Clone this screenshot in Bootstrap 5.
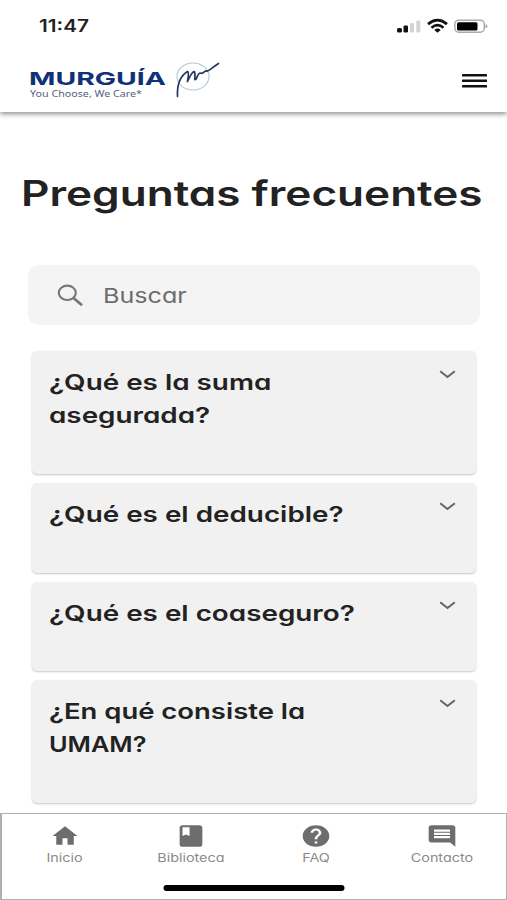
<!DOCTYPE html>
<html lang="es">
<head>
<meta charset="utf-8">
<meta name="viewport" content="width=device-width, initial-scale=1">
<title>Preguntas frecuentes</title>
<link href="https://cdn.jsdelivr.net/npm/bootstrap@5.3.0/dist/css/bootstrap.min.css" rel="stylesheet">
<style>
  body { font-family: Inter, "Open Sans", sans-serif; font-feature-settings: "cv11"; color: #222; height: 900px; overflow: hidden; background: #fff; }
  svg { display: block; flex: none; }
  .wide { display: inline-block; white-space: nowrap; transform-origin: left center; }
  .app-header { height: 112px; box-shadow: 0 2px 5px rgba(0,0,0,.45); flex: none; }
  .status { height: 52px; padding: 0 19px 0 39px; }
  .clock { font-size: 17px; font-weight: 600; line-height: 54px; transform: scaleX(1.22); font-feature-settings: normal; }
  .brand-bar { height: 58px; padding: 0 19px 0 28px; }
  .page-title { font-size: 35px; font-weight: 560; line-height: 44px; margin: 59px 0 0 21px; }
  .page-title .wide { transform: scaleX(1.26); }
  .search { height: 60px; margin: 50px 27px 0 28px; border-radius: 11px; background: #f4f4f4; padding-left: 29px; color: #6c6c6c; font-size: 20.5px; flex: none; }
  .search .wide { margin: 2px 0 0 19px; transform: scaleX(1.225); }
  .faq-list { margin: 26px 31px 0 32px; gap: 9px; }
  .faq-item { background: #f1f1f1; border-radius: 5px; box-shadow: 0 1px 2px rgba(0,0,0,.22); padding: 14px 20px 0 17px; height: 89.7px; flex: none; }
  .faq-item.tall { height: 123px; }
  .question { font-size: 22px; line-height: 33px; font-weight: 560; margin: 1px 0 0; }
  .question .wide { transform: scaleX(1.265); }
  .question .wide.caps { transform: scaleX(1.15); }
  .question .wide.snug { transform: scaleX(1.248); }
  .chevron { margin-top: 5px; }
  .tabbar { height: 87px; border: 1.5px solid #b0b0b0; border-left-width: 2px; background: #fff; color: #707070; z-index: 2; padding-right: 1px; }
  .tabbar a { color: #8b8b8b; font-size: 11.5px; line-height: 16px; padding-top: 9px; }
  .tabbar .wide { transform-origin: center; transform: scaleX(1.25); margin-top: 1px; }
  .tabbar svg { color: #6d6d6d; }
  .home-bar { width: 181px; height: 6px; background: #000; border-radius: 3px; bottom: 8px; }
</style>
</head>
<body class="d-flex flex-column position-relative">
<header class="app-header bg-white">
  <div class="status d-flex justify-content-between align-items-center">
    <span class="wide clock">11:47</span>
    <svg width="91" height="16" viewBox="0 0 91 16">
      <g fill="#111"><rect x="0" y="10" width="5" height="4.5" rx="1.5"/><rect x="6.5" y="7.5" width="4.5" height="7" rx="1.3"/></g>
      <g fill="#d3d3d3"><rect x="13" y="5" width="4" height="9.5" rx="1.2"/><rect x="19.300" y="2.500" width="4" height="12" rx="1.2"/></g>
      <g fill="none" stroke="#111" stroke-width="2.700"><path d="M31 6.100Q40.500-1.900 50 6.100"/><path d="M34.500 9.700Q40.500 4.700 46.500 9.700"/></g>
      <path d="M37.300 11.900Q40.500 9.300 43.700 11.900L40.500 14.800Z" fill="#111"/>
      <rect x="57.800" y="2.200" width="29.500" height="12" rx="4" fill="#fff" stroke="#aaa" stroke-width="1.500"/>
      <rect x="60" y="4.200" width="20.500" height="8.300" rx="1.500" fill="#000"/>
      <path d="M88.500 6v4.500q2-.6 2-2.200t-2-2.300" fill="#aaa"/>
    </svg>
  </div>
  <div class="brand-bar d-flex justify-content-between align-items-center">
    <svg width="195" height="42" viewBox="0 0 195 42" role="img" aria-label="Murguía">
      <text x="1" y="24.500" font-family="Inter, sans-serif" font-weight="700" font-size="18" fill="#10307a" textLength="137" lengthAdjust="spacingAndGlyphs">MURGUÍA</text>
      <text x="2" y="36.700" font-family="'Noto Sans', sans-serif" font-size="9.300" fill="#55617f" textLength="112" lengthAdjust="spacingAndGlyphs">You Choose, We Care*</text>
      <ellipse cx="165" cy="16.500" rx="16" ry="13.500" fill="none" stroke="#b4c5de" stroke-width="1.100"/>
      <path d="M149.500 36.500C149 27 151.500 16.500 159.500 11.500C161.500 12.500 160 17 159.500 21.500C161.500 17 163.500 12.500 166 11.500C168 13 166.500 17 166.800 19.500C169 20.500 169 13.500 172 13C175.500 14.500 176.500 10.500 178.500 11C180.500 12 184 7.500 190.500 3.500" fill="none" stroke="#25375f" stroke-width="1.700" stroke-linecap="round" stroke-linejoin="round"/>
    </svg>
    <svg width="27" height="16" viewBox="0 0 27 16" fill="#111"><rect x="1" y="1" width="25" height="2.500" rx=".5"/><rect x="1" y="6.500" width="25" height="2.500" rx=".5"/><rect x="1" y="12" width="25" height="2.500" rx=".5"/></svg>
  </div>
</header>

<h1 class="page-title"><span class="wide">Preguntas frecuentes</span></h1>

<div class="search d-flex align-items-center">
  <svg width="27" height="23" viewBox="0 0 27 23" fill="none" stroke="#777"><ellipse cx="10.300" cy="8.800" rx="8.500" ry="7.200" stroke-width="2.100"/><path d="M16.500 14L25 21.300" stroke-width="2.800"/></svg>
  <span class="wide">Buscar</span>
</div>

<main class="faq-list d-flex flex-column">
  <section class="faq-item tall d-flex justify-content-between align-items-start">
    <h2 class="question"><span class="wide">¿Qué es la suma</span><br><span class="wide">asegurada?</span></h2>
    <svg class="chevron" width="17" height="9" viewBox="0 0 17 9" fill="none" stroke="#666" stroke-width="2"><path d="M1.200 1.200L8.500 7L15.800 1.200"/></svg>
  </section>
  <section class="faq-item d-flex justify-content-between align-items-start">
    <h2 class="question"><span class="wide">¿Qué es el deducible?</span></h2>
    <svg class="chevron" width="17" height="9" viewBox="0 0 17 9" fill="none" stroke="#666" stroke-width="2"><path d="M1.200 1.200L8.500 7L15.800 1.200"/></svg>
  </section>
  <section class="faq-item d-flex justify-content-between align-items-start">
    <h2 class="question"><span class="wide">¿Qué es el coaseguro?</span></h2>
    <svg class="chevron" width="17" height="9" viewBox="0 0 17 9" fill="none" stroke="#666" stroke-width="2"><path d="M1.200 1.200L8.500 7L15.800 1.200"/></svg>
  </section>
  <section class="faq-item tall d-flex justify-content-between align-items-start">
    <h2 class="question"><span class="wide snug">¿En qué consiste la</span><br><span class="wide caps">UMAM?</span></h2>
    <svg class="chevron" width="17" height="9" viewBox="0 0 17 9" fill="none" stroke="#666" stroke-width="2"><path d="M1.200 1.200L8.500 7L15.800 1.200"/></svg>
  </section>
</main>

<nav class="tabbar fixed-bottom d-flex">
  <a class="col-3 d-flex flex-column align-items-center text-decoration-none" href="#">
    <svg width="30" height="26" viewBox="0 0 24 24" preserveAspectRatio="none" fill="currentColor"><path d="M10 20v-6h4v6h5v-8h3L12 3 2 12h3v8z"/></svg>
    <span class="wide">Inicio</span>
  </a>
  <a class="col-3 d-flex flex-column align-items-center text-decoration-none" href="#">
    <svg width="34" height="26" viewBox="0 0 24 24" preserveAspectRatio="none" fill="currentColor"><path d="M18 2H6c-1.100 0-2 .9-2 2v16c0 1.100.9 2 2 2h12c1.100 0 2-.9 2-2V4c0-1.100-.9-2-2-2zM6 4h5v8l-2.500-1.500L6 12V4z"/></svg>
    <span class="wide">Biblioteca</span>
  </a>
  <a class="col-3 d-flex flex-column align-items-center text-decoration-none" href="#">
    <svg width="32" height="26" viewBox="0 0 24 24" preserveAspectRatio="none" fill="currentColor"><path d="M12 2C6.480 2 2 6.480 2 12s4.480 10 10 10 10-4.480 10-10S17.520 2 12 2zm1 17h-2v-2h2v2zm2.070-7.750l-.9.920C13.450 12.900 13 13.500 13 15h-2v-.5c0-1.100.45-2.100 1.170-2.830l1.240-1.260c.37-.36.59-.86.59-1.410 0-1.100-.9-2-2-2s-2 .9-2 2H8c0-2.210 1.790-4 4-4s4 1.790 4 4c0 .88-.36 1.680-.93 2.250z"/></svg>
    <span class="wide">FAQ</span>
  </a>
  <a class="col-3 d-flex flex-column align-items-center text-decoration-none" href="#">
    <svg width="32" height="26" viewBox="0 0 24 24" preserveAspectRatio="none" fill="currentColor"><path d="M21.990 4c0-1.100-.89-2-1.990-2H4c-1.100 0-2 .9-2 2v12c0 1.100.9 2 2 2h14l4 4-.01-18zM18 14H6v-2h12v2zm0-3H6V9h12v2zm0-3H6V6h12v2z"/></svg>
    <span class="wide">Contacto</span>
  </a>
  <div class="home-bar position-absolute start-50 translate-middle-x"></div>
</nav>
<script src="https://cdn.jsdelivr.net/npm/bootstrap@5.3.0/dist/js/bootstrap.bundle.min.js"></script>
</body>
</html>
